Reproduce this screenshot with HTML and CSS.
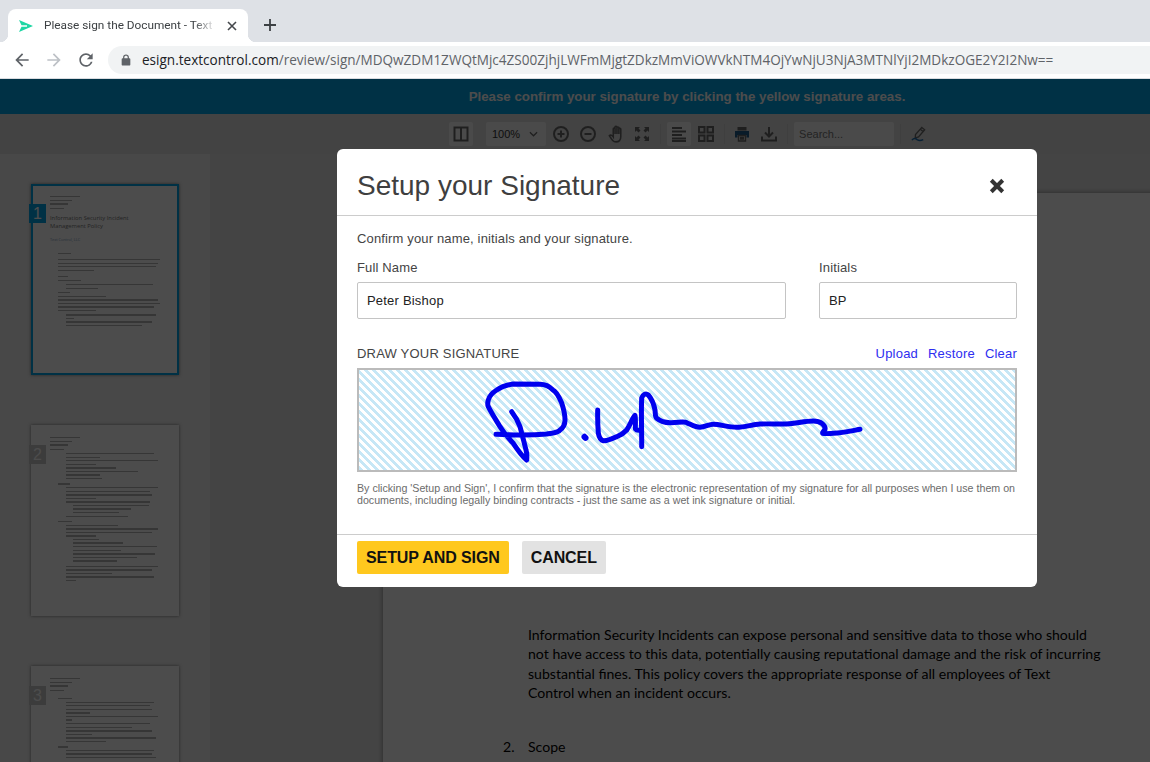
FILE: index.html
```html
<!DOCTYPE html>
<html lang="en">
  <head>
    <meta charset="UTF-8" />
    <meta name="viewport" content="width=device-width, initial-scale=1.0" />
    <title>Please sign the Document - Text Control</title>
    <link rel="stylesheet" href="styles.css">
  </head>

  <body>
    <!-- Browser frame -->
    <div class="tabstrip">
      <div class="tab">
        <svg class="favicon" viewBox="0 0 14 12"><path d="M0 0L14 6L0 12L2.5 6.8H8V5.2H2.5z" /></svg>
        <span class="tab-title">Please sign the Document - Text C</span>
        <svg class="tab-close" viewBox="0 0 10 10"><path d="M1 1L9 9M9 1L1 9" /></svg>
      </div>
      <svg class="newtab" viewBox="0 0 12 12"><path d="M6 0V12M0 6H12" /></svg>
    </div>
    <div class="navbar">
      <svg class="navicon" viewBox="0 0 24 24"><path d="M20 11H7.83l5.59-5.59L12 4l-8 8 8 8 1.41-1.41L7.83 13H20v-2z" /></svg>
      <svg class="navicon off" viewBox="0 0 24 24"><path d="M4 11h12.17l-5.59-5.59L12 4l8 8-8 8-1.41-1.41L16.17 13H4v-2z" /></svg>
      <svg class="navicon" viewBox="0 0 24 24"><path d="M17.65 6.35A7.958 7.958 0 0 0 12 4c-4.42 0-7.99 3.58-7.99 8s3.57 8 7.99 8c3.73 0 6.84-2.55 7.73-6h-2.08A5.99 5.99 0 0 1 12 18c-3.31 0-6-2.69-6-6s2.69-6 6-6c1.66 0 3.14.69 4.22 1.78L13 11h7V4l-2.35 2.35z" /></svg>
      <div class="omnibox">
        <svg class="lock" viewBox="0 0 12 14"><path d="M10 5H9.5V3.6C9.5 1.8 8 .5 6 .5S2.500 1.800 2.500 3.600V5H2C1.200 5 .8 5.500 .8 6.200V12.500C.8 13.200 1.200 13.700 2 13.700H10C10.800 13.700 11.200 13.200 11.200 12.500V6.200C11.200 5.500 10.800 5 10 5ZM8 5H4V3.600C4 2.600 4.900 1.900 6 1.900S8 2.600 8 3.600Z" /></svg>
        <span class="url"><b>esign.textcontrol.com</b>/review/sign/MDQwZDM1ZWQtMjc4ZS00ZjhjLWFmMjgtZDkzMmViOWVkNTM4OjYwNjU3NjA3MTNlYjI2MDkzOGE2Y2I2Nw==</span>
      </div>
    </div>

    <div class="viewport">
      <div class="banner">Please confirm your signature by clicking the yellow signature areas.</div>

      <div class="toolbar">
        <span class="tool box">
          <svg viewBox="0 0 16 16"><path class="line" d="M1.500 1.500H14.500V14.500H1.500ZM8 1.500V14.500" /></svg>
        </span>
        <span class="zoomsel">100%
          <svg viewBox="0 0 10 6"><path class="line thin" d="M1 1L5 5L9 1" /></svg>
        </span>
        <span class="tool">
          <svg viewBox="0 0 16 16"><circle class="line" cx="8" cy="8" r="7" /><path class="line" d="M4.500 8H11.500M8 4.500V11.500" /></svg>
        </span>
        <span class="tool">
          <svg viewBox="0 0 16 16"><circle class="line" cx="8" cy="8" r="7" /><path class="line" d="M4.500 8H11.500" /></svg>
        </span>
        <span class="tool">
          <svg class="hand" viewBox="0 0 13 16"><path class="line thin" d="M1 9.500C2 8.500 3.500 9 4.500 10.500V3.500C4.500 2.500 6 2.500 6 3.500V2C6 1 7.800 1 7.800 2V2.500C7.800 1.500 9.500 1.500 9.500 2.500V3.500C9.500 2.800 11.200 2.800 11.200 3.800V10.500C11.200 13.500 9.500 15 7 15C4.500 15 3.500 13.500 1 9.500ZM6.100 3V8M7.800 2.500V8M9.500 3V8" /></svg>
        </span>
        <span class="tool">
          <svg viewBox="0 0 16 16"><path class="solid" d="M1 1H6L4.500 2.500L6.500 4.500L4.500 6.500L2.500 4.500L1 6ZM15 1V6L13.500 4.500L11.500 6.500L9.500 4.500L11.500 2.500L10 1ZM1 15V10L2.500 11.500L4.500 9.500L6.500 11.500L4.500 13.500L6 15ZM15 15H10L11.500 13.500L9.500 11.500L11.500 9.500L13.500 11.500L15 10Z" /></svg>
        </span>
        <span class="sep"></span>
        <span class="tool box">
          <svg viewBox="0 0 16 16"><path class="line" d="M1 2H11M1 5.500H15M1 9H11M1 12.500H15M1 15H15" /></svg>
        </span>
        <span class="tool">
          <svg viewBox="0 0 16 16"><path class="line" d="M1 1H6.500V6.500H1ZM9.500 1H15V6.500H9.500ZM1 9.500H6.500V15H1ZM9.500 9.500H15V15H9.500Z" /></svg>
        </span>
        <span class="sep"></span>
        <span class="tool">
          <svg viewBox="0 0 16 16"><path class="solid" d="M3.500 1H12.500V4.500H3.500Z" /><path class="blue" d="M1 5H15V11.500H12.500V9H3.500V11.500H1Z" /><path class="line thin" d="M4.500 9.500H11.500V15H4.500ZM6 11.500H10M6 13H10" /></svg>
        </span>
        <span class="tool">
          <svg viewBox="0 0 16 16"><path class="line" d="M8 1V10M4 6.500L8 10.500L12 6.500M1 10.500V14.500H15V10.500" /></svg>
        </span>
        <span class="sep"></span>
        <input class="search" placeholder="Search..." />
        <span class="sep"></span>
        <span class="tool">
          <svg viewBox="0 0 17 17"><path class="line thin" d="M11.500 1.500L14.500 4L8 11.500L4.500 12.500L4.800 9ZM10 3.500L13 6" /><path class="blueline" d="M1 15C3 12.500 5 13 6.500 14.500C8.500 16 11 15.500 13 14.500" /></svg>
        </span>
      </div>

      <div class="main">
        <div class="sidebar">
          <div class="thumb current">
            <span class="pagenr">1</span>
            <i class="ln" style="width:30px"></i><i class="ln" style="width:22px"></i><i class="ln" style="width:18px"></i>
            <i class="ln m3" style="width:14px"></i>
            <p class="thumb-title">Information Security Incident Management Policy</p>
            <p class="thumb-sub">Text Control, LLC</p>
            <i class="ln m11 in1" style="width:13px"></i>
            <i class="ln m5 in1" style="width:102px"></i><i class="ln in1" style="width:100px"></i><i class="ln in1" style="width:98px"></i><i class="ln in1" style="width:36px"></i>
            <i class="ln m5 in1" style="width:10px"></i>
            <i class="ln m2 in1" style="width:23px"></i>
            <i class="ln m3 in2" style="width:87px"></i><i class="ln in2" style="width:32px"></i>
            <i class="ln m3 in1" style="width:12px"></i>
            <i class="ln m2 in1" style="width:48px"></i>
            <i class="ln m2 in1" style="width:100px"></i><i class="ln in1" style="width:102px"></i><i class="ln in1" style="width:96px"></i>
            <i class="ln m2 in1" style="width:38px"></i>
            <i class="ln m3 in2" style="width:90px"></i><i class="ln in2" style="width:8px"></i>
            <i class="ln in2" style="width:86px"></i><i class="ln in2" style="width:76px"></i>
          </div>

          <div class="thumb">
            <span class="pagenr">2</span>
            <i class="ln" style="width:30px"></i><i class="ln" style="width:22px"></i><i class="ln" style="width:18px"></i>
            <i class="ln m3" style="width:14px"></i>
            <i class="ln m3 in2" style="width:88px"></i><i class="ln in2" style="width:34px"></i>
            <i class="ln in2" style="width:92px"></i><i class="ln in2" style="width:30px"></i>
            <i class="ln in2" style="width:50px"></i><i class="ln in2" style="width:72px"></i><i class="ln in2" style="width:34px"></i><i class="ln in2" style="width:36px"></i>
            <i class="ln m4 in1" style="width:12px"></i>
            <i class="ln m2 in2" style="width:92px"></i><i class="ln in2" style="width:84px"></i><i class="ln in2" style="width:86px"></i><i class="ln in2" style="width:30px"></i>
            <i class="ln in2" style="width:84px"></i><i class="ln in3" style="width:76px"></i><i class="ln in3" style="width:58px"></i><i class="ln in3" style="width:46px"></i>
            <i class="ln in2" style="width:62px"></i>
            <i class="ln m4 in1" style="width:14px"></i>
            <i class="ln m2 in2" style="width:52px"></i><i class="ln in2" style="width:92px"></i><i class="ln in2" style="width:86px"></i><i class="ln in2" style="width:30px"></i>
            <i class="ln in3" style="width:26px"></i><i class="ln in3" style="width:50px"></i><i class="ln in3" style="width:84px"></i><i class="ln in3" style="width:48px"></i>
            <i class="ln in3" style="width:82px"></i><i class="ln in3" style="width:64px"></i><i class="ln in3" style="width:44px"></i>
            <i class="ln m4 in2" style="width:92px"></i><i class="ln in2" style="width:86px"></i><i class="ln in2" style="width:46px"></i>
            <i class="ln in2" style="width:88px"></i><i class="ln in2" style="width:10px"></i>
          </div>

          <div class="thumb">
            <span class="pagenr">3</span>
            <i class="ln" style="width:30px"></i><i class="ln" style="width:22px"></i><i class="ln" style="width:18px"></i>
            <i class="ln m3" style="width:14px"></i>
            <i class="ln m7 in1" style="width:14px"></i>
            <i class="ln m2 in2" style="width:88px"></i><i class="ln in2" style="width:84px"></i><i class="ln in2" style="width:86px"></i><i class="ln in2" style="width:24px"></i>
            <i class="ln in2" style="width:92px"></i><i class="ln in2" style="width:6px"></i>
            <i class="ln in2" style="width:84px"></i><i class="ln in2" style="width:66px"></i>
            <i class="ln in2" style="width:86px"></i><i class="ln in2" style="width:26px"></i>
            <i class="ln in2" style="width:90px"></i><i class="ln in2" style="width:40px"></i>
            <i class="ln m4 in1" style="width:10px"></i>
            <i class="ln m2 in2" style="width:88px"></i><i class="ln in2" style="width:86px"></i><i class="ln in2" style="width:90px"></i>
          </div>
        </div>

        <div class="docarea">
          <div class="docpage">
            <div class="item"><span class="num">1.</span><span>Purpose</span></div>
            <p class="para">Information Security Incidents can expose personal and sensitive data to those who should not have access to this data, potentially causing reputational damage and the risk of incurring substantial fines. This policy covers the appropriate response of all employees of Text<br />Control when an incident occurs.</p>
            <div class="item"><span class="num">2.</span><span>Scope</span></div>
          </div>
        </div>
      </div>

      <!-- Everything under the dialog is dimmed by this layer -->
      <div class="overlay">
        <div class="modal">
          <div class="modal-head">
            <h1>Setup your Signature</h1>
            <svg class="modal-close" viewBox="0 0 14 14"><path d="M2 2L12 12M12 2L2 12" /></svg>
          </div>
          <div class="modal-body">
            <p class="intro">Confirm your name, initials and your signature.</p>
            <div class="fields">
              <div>
                <label for="fullName">Full Name</label>
                <input id="fullName" value="Peter Bishop" />
              </div>
              <div>
                <label for="initials">Initials</label>
                <input id="initials" value="BP" />
              </div>
            </div>
            <div class="sign-head">
              <span>DRAW YOUR SIGNATURE</span>
              <span class="links"><a>Upload</a><a>Restore</a><a>Clear</a></span>
            </div>
            <div class="sign-canvas">
              <svg viewBox="359 370 656 100">
                <path d="M496 434.300C510 435 530 435.500 546.700 434C553 433 558 433 560 430C564 427 565 424 565 420C565 413 563 407 561.700 403C559 397 557 392 553 390C549 386 545 384.300 540 384.300L513 384C506 385 501 387 496.700 390C492 393 489 397 488.300 400C487.500 403 487.500 405 488.300 406.700C492 414 496 420 500 426.700C504 433 508 438 513.300 443.300C517 449 522 456 526.700 460C527 456 527 453 526 450C524 442 522 434 520 426.700C518 421 515 416 511.700 411.700" />
                <path class="dot" d="M584.500 436.800L585.500 437.800" />
                <path d="M597.700 410C597.500 418 597.800 426 598.300 433C599 437 600 440 603.300 440.700C608 441 612 439 616.700 436.700C621 435 624 433 626.700 430C630 425 632 419 635 415.500C636 421 635 426 635.500 429C637 431 639 430 641 430M641.700 446.700C641.800 432 641 412 641.700 398C643 394 646 393 648.300 395C651 398 654 405 655 410C655.500 414 655 417 656.700 418.300C660 421 665 422.700 670 422.700C677 423 684 421 686.700 422.700C692 425 696 427.500 700 427.300C705 427 709 424.300 713.300 424.300C720 424.300 728 427.300 736.700 427.300C745 427.300 752 424.500 760 424C770 423.500 778 424.500 786.700 424C796 423.500 805 421 813.300 421C817 421 820 422 821.700 423.300C824 425 825.500 427 825 429.300C824 431 822 432 822.700 433.300C825 434 829 433.500 833.300 433.300C842 433 851 431 860 429.300" />
              </svg>
            </div>
            <p class="legal">By clicking 'Setup and Sign', I confirm that the signature is the electronic representation of my signature for all purposes when I use them on documents, including legally binding contracts - just the same as a wet ink signature or initial.</p>
          </div>
          <div class="modal-foot">
            <button class="btn primary">SETUP AND SIGN</button>
            <button class="btn">CANCEL</button>
          </div>
        </div>
      </div>
    </div>
  </body>
</html>
```

FILE: styles.css
```css
html, body {
  height: 100%;
  margin: 0;
  overflow: hidden;
}
body {
  display: flex;
  flex-direction: column;
  font-family: "Liberation Sans", Arial, sans-serif;
  background-color: white;
}
svg {
  display: block;
}

/* browser frame */
.tabstrip {
  display: flex;
  align-items: flex-end;
  height: 42px;
  flex-shrink: 0;
  background-color: #dee1e6;
}
.tab {
  position: relative;
  display: flex;
  align-items: center;
  width: 240px;
  height: 33px;
  margin-left: 8px;
  box-sizing: border-box;
  padding: 0 11px 0 11px;
  background-color: white;
  border-radius: 8px 8px 0 0;
}
.tab::after {
  content: "";
  position: absolute;
  right: -8px;
  bottom: 0;
  width: 8px;
  height: 8px;
  background: radial-gradient(circle at 100% 0, transparent 8px, white 8.5px);
}
.tab::before {
  content: "";
  position: absolute;
  left: -8px;
  bottom: 0;
  width: 8px;
  height: 8px;
  background: radial-gradient(circle at 0 0, transparent 8px, white 8.5px);
}
.favicon {
  width: 14px;
  height: 12px;
  fill: #1dd6a3;
  flex-shrink: 0;
}
.tab-title {
  flex: 1;
  margin: 0 0 1px 11px;
  white-space: nowrap;
  font: 11.800px Roboto, sans-serif;
  color: #3c4043;
  -webkit-mask-image: linear-gradient(to right, black 150px, transparent 172px);
  mask-image: linear-gradient(to right, black 150px, transparent 172px);
}
.tab-close {
  width: 10px;
  height: 10px;
  flex-shrink: 0;
  fill: none;
  stroke: #45484c;
  stroke-width: 1.6;
}
.newtab {
  width: 12px;
  height: 12px;
  margin: 0 0 11px 16px;
  fill: none;
  stroke: #3c4043;
  stroke-width: 1.800;
}
.navbar {
  display: flex;
  align-items: center;
  height: 36px;
  flex-shrink: 0;
  padding-left: 12px;
  box-sizing: content-box;
  background-color: white;
  border-bottom: 1px solid #dadce0;
}
.navicon {
  width: 20px;
  height: 20px;
  margin-right: 12px;
  fill: #5f6368;
}
.navicon.off {
  fill: #bdc1c6;
}
.omnibox {
  flex: 1;
  display: flex;
  align-items: center;
  height: 28px;
  margin-left: 0;
  padding-left: 13px;
  background-color: #f1f3f4;
  border-radius: 14px 0 0 14px;
  overflow: hidden;
}
.lock {
  width: 10px;
  height: 12px;
  fill: #5f6368;
  flex-shrink: 0;
}
.url {
  margin-left: 11px;
  white-space: nowrap;
  font: 13.550px "Open Sans", sans-serif;
  color: #5f6368;
}
.url b {
  font-weight: normal;
  color: #202124;
}

/* app */
.viewport {
  position: relative;
  flex: 1;
  display: flex;
  flex-direction: column;
  min-height: 0;
  overflow: hidden;
}
.banner {
  height: 35px;
  flex-shrink: 0;
  line-height: 35px;
  padding-left: 224px;
  text-align: center;
  font-size: 13.300px;
  font-weight: bold;
  color: white;
  background-color: #00a4e8;
}
.toolbar {
  display: flex;
  align-items: center;
  height: 40px;
  flex-shrink: 0;
  padding-left: 449px;
  box-sizing: border-box;
  background-color: #dfdfdf;
}
.tool {
  display: flex;
  align-items: center;
  justify-content: center;
  width: 24px;
  height: 24px;
  margin-right: 3px;
  border-radius: 2px;
}
.tool svg {
  width: 16px;
  height: 16px;
}
.tool svg.hand {
  width: 17px;
  height: 18px;
}
.box {
  background-color: #f8f8f8;
}
.line {
  fill: none;
  stroke: #6a6a6a;
  stroke-width: 2;
}
.line.thin {
  stroke-width: 1.400;
}
.solid {
  fill: #6a6a6a;
}
.blue {
  fill: #1f5a8a;
}
.blueline {
  fill: none;
  stroke: #1f6fb0;
  stroke-width: 1.600;
}
.zoomsel {
  display: flex;
  align-items: center;
  justify-content: space-between;
  width: 60px;
  height: 24px;
  margin: 0 3px 0 10px;
  padding: 0 8px 0 6px;
  box-sizing: border-box;
  font-size: 11px;
  color: #333;
  background-color: #f8f8f8;
  border-radius: 2px;
}
.zoomsel svg {
  width: 9px;
  height: 6px;
}
.sep {
  width: 1px;
  height: 20px;
  margin: 0 5.700px 0 3px;
  background-color: #d2d2d2;
}
.search {
  width: 100px;
  height: 24px;
  margin-left: 0;
  margin-right: 3px;
  padding: 0 5px;
  box-sizing: border-box;
  border: 0;
  border-radius: 2px;
  font: 11px "Liberation Sans", sans-serif;
  background-color: #f8f8f8;
}
.search::placeholder {
  color: #777;
}

.main {
  flex: 1;
  display: flex;
  min-height: 0;
  background-color: #e4e4e4;
}
.sidebar {
  width: 210px;
  flex-shrink: 0;
  padding: 30px 0 0 31px;
  box-sizing: border-box;
  background-color: #f0f0f0;
}
.thumb {
  position: relative;
  width: 148px;
  height: 191px;
  margin-bottom: 50px;
  padding: 12px 0 0 19px;
  box-sizing: border-box;
  background-color: white;
  box-shadow: 0 0 3px rgba(0, 0, 0, 0.5);
}
.thumb.current {
  padding: 10px 0 0 17px;
  border: 2px solid #00a4e8;
}
.pagenr {
  position: absolute;
  left: -2px;
  top: 20px;
  width: 17px;
  height: 19px;
  line-height: 19px;
  text-align: center;
  font-size: 16px;
  color: white;
  background-color: #c8c8c8;
}
.current .pagenr {
  left: -4px;
  top: 18px;
  background-color: #00a4e8;
}
.ln {
  display: block;
  height: 1.400px;
  margin-bottom: 2.200px;
  background-color: #b4b4b4;
  filter: blur(0.5px);
}
.m2 { margin-top: 2px; }
.m3 { margin-top: 3px; }
.m4 { margin-top: 4px; }
.m5 { margin-top: 5px; }
.m7 { margin-top: 7px; }
.m11 { margin-top: 11px; }
.in1 { margin-left: 8px; }
.in2 { margin-left: 16px; }
.in3 { margin-left: 23px; }
.thumb-title {
  width: 100px;
  margin: 5px 0 0;
  font: 5.800px/8.300px "Open Sans", sans-serif;
  color: #777;
}
.thumb-sub {
  margin: 6px 0 0;
  font: 3.800px "Open Sans", sans-serif;
  color: #7d9cc0;
}
.docarea {
  flex: 1;
  min-width: 0;
  padding: 39px 0 0 173px;
}
.docpage {
  width: 800px;
  height: 1000px;
  padding: 377px 0 0 120px;
  box-sizing: border-box;
  background-color: white;
  box-shadow: 0 0 5px rgba(0, 0, 0, 0.4);
  font: 14.100px/19.500px Lato, sans-serif;
  color: black;
}
.item {
  display: flex;
}
.num {
  width: 25px;
}
.para {
  width: 578px;
  margin: 35px 0 34px 25px;
}

/* dialog */
.overlay {
  position: absolute;
  inset: 0;
  padding: 70px 0 0 337px;
  background-color: rgba(0, 0, 0, 0.7);
}
.modal {
  width: 700px;
  height: 438px;
  display: flex;
  flex-direction: column;
  background-color: white;
  border-radius: 6px;
  color: #444;
}
.modal-head {
  display: flex;
  align-items: center;
  justify-content: space-between;
  flex-shrink: 0;
  padding: 7px 32px 0 20px;
  height: 59px;
  border-bottom: 1px solid #ccc;
}
h1 {
  margin: 0;
  font-size: 28px;
  font-weight: normal;
  color: #3f3f3f;
}
.modal-close {
  width: 16px;
  height: 16px;
  fill: none;
  stroke: #333;
  stroke-width: 3.500;
}
.modal-body {
  flex: 1;
  padding: 15px 20px 0;
}
.intro {
  margin: 0 0 13px;
  font-size: 13px;
  line-height: 16px;
  letter-spacing: 0.15px;
}
.fields {
  display: grid;
  grid-template-columns: 429px 198px;
  gap: 33px;
}
label {
  display: block;
  height: 22px;
  font-size: 13px;
  line-height: 16px;
  letter-spacing: 0.15px;
}
.fields input {
  display: block;
  width: 100%;
  height: 37px;
  padding: 0 9px;
  box-sizing: border-box;
  border: 1px solid #c4c4c4;
  border-radius: 2px;
  font: 13px "Liberation Sans", sans-serif;
  letter-spacing: 0.2px;
  color: #222;
}
.sign-head {
  display: flex;
  justify-content: space-between;
  margin-top: 27px;
  height: 22px;
  font-size: 13px;
  line-height: 16px;
  letter-spacing: 0.2px;
}
.links a {
  margin-left: 10px;
  color: #2e2ef0;
}
.sign-canvas {
  height: 104px;
  box-sizing: border-box;
  border: 2px solid #bbb;
  background: repeating-linear-gradient(45deg, #c6e7f6 0, #c6e7f6 3px, white 3px, white 5.660px);
}
.sign-canvas svg {
  width: 656px;
  height: 100px;
  fill: none;
  stroke: #0000ee;
  stroke-width: 5;
  stroke-linecap: round;
  stroke-linejoin: round;
}
.sign-canvas .dot {
  stroke-width: 6;
}
.legal {
  margin: 10px 0 0;
  font-size: 10.670px;
  line-height: 12px;
  color: #6b6b6b;
}
.modal-foot {
  display: flex;
  gap: 13px;
  height: 53px;
  flex-shrink: 0;
  padding: 6px 20px 0;
  box-sizing: border-box;
  border-top: 1px solid #ccc;
}
.btn {
  height: 33px;
  padding: 0 9px;
  border: 0;
  border-radius: 2px;
  font: bold 16px "Liberation Sans", sans-serif;
  letter-spacing: -0.1px;
  color: #111;
  background-color: #e2e2e2;
}
.btn.primary {
  background-color: #ffc81e;
}
```
